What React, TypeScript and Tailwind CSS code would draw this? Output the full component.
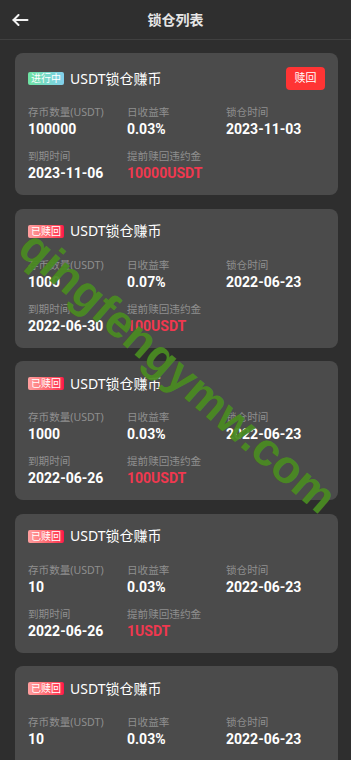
import { ReactNode } from 'react';

type Lock = {
    status: 'running' | 'redeemed';
    amount: string;
    rate: string;
    lockDate: string;
    endDate: string;
    penalty: string;
};

const locks: Lock[] = [
    { status: 'running', amount: '100000', rate: '0.03%', lockDate: '2023-11-03', endDate: '2023-11-06', penalty: '10000USDT' },
    { status: 'redeemed', amount: '1000', rate: '0.07%', lockDate: '2022-06-23', endDate: '2022-06-30', penalty: '100USDT' },
    { status: 'redeemed', amount: '1000', rate: '0.03%', lockDate: '2022-06-23', endDate: '2022-06-26', penalty: '100USDT' },
    { status: 'redeemed', amount: '10', rate: '0.03%', lockDate: '2022-06-23', endDate: '2022-06-26', penalty: '1USDT' },
    { status: 'redeemed', amount: '10', rate: '0.03%', lockDate: '2022-06-23', endDate: '2022-06-26', penalty: '1USDT' },
];

const cjk = { fontFamily: '"Noto Sans", "Noto Sans CJK SC", sans-serif' };
const num = { fontFamily: '"Liberation Sans Narrow", Roboto, "Noto Sans CJK SC", sans-serif' };

function Field({ label, children, red }: { label: string; children: ReactNode; red?: boolean }) {
    return (
        <div className="flex flex-col">
            <div className="text-[10.6px] leading-[16px] text-[#8f8f8f]" style={cjk}>{label}</div>
            <div
                className={red ? 'text-[14px] leading-[18px] font-bold text-[#f0384f]' : 'text-[14px] leading-[18px] font-bold text-white'}
                style={num}
            >
                {children}
            </div>
        </div>
    );
}

function LockCard({ item }: { item: Lock }) {
    const running = item.status === 'running';
    return (
        <div className={running ? 'ml-[15px] mr-[13px] rounded-lg bg-[#4b4b4b] px-[13px] pt-[14px] pb-[13px]' : 'ml-[15px] mr-[13px] rounded-lg bg-[#4b4b4b] px-[13px] pt-[11px] pb-[13px]'}>
            {/* title row */}
            <div className="flex h-[23px] items-center">
                {running ? (
                    <span className="h-[13px] rounded-[2px] bg-gradient-to-r from-[#6ee3a2] to-[#82cfec] px-[3px] text-[10px] leading-[13px] text-white" style={cjk}>进行中</span>
                ) : (
                    <span className="h-[13px] rounded-[2px] bg-gradient-to-r from-[#ff9f9f] to-[#ff1247] px-[3px] text-[10px] leading-[13px] text-white" style={cjk}>已赎回</span>
                )}
                <span className="ml-[6px] text-[14px] leading-[20px] text-white" style={cjk}>USDT锁仓赚币</span>
                {running && (
                    <button className="ml-auto h-[23px] w-[39px] rounded-[4px] bg-[#ff3434] text-[11px] text-white" style={cjk}>赎回</button>
                )}
            </div>

            <div className="mt-[14px] grid grid-cols-3 gap-y-[10px]">
                <Field label="存币数量(USDT)">{item.amount}</Field>
                <Field label="日收益率">{item.rate}</Field>
                <Field label="锁仓时间">{item.lockDate}</Field>
                <Field label="到期时间">{item.endDate}</Field>
                <Field label="提前赎回违约金" red>{item.penalty}</Field>
            </div>
        </div>
    );
}

export default function App() {
    return (
        <div className="relative min-h-screen overflow-hidden bg-[#2e2e2e]" style={cjk}>
            <div className="grid h-[40px] grid-cols-[40px_1fr_40px] items-center border-b border-[#404040] bg-[#2f2f2f]">
                <div className="flex items-center pl-[12px]">
                    <svg width="17" height="12" viewBox="0 0 17 12" fill="none" stroke="#f2f2f2" strokeWidth="2" strokeLinecap="round" strokeLinejoin="round">
                        <path d="M1.5 6H15.5" />
                        <path d="M6.5 1L1.5 6L6.5 11" />
                    </svg>
                </div>
                <div className="text-center text-[14px] font-bold text-[#e6e6e6]">锁仓列表</div>
                <div />
            </div>

            <div className="flex flex-col gap-[13.5px] pt-[13px] pb-[20px]">
                {locks.map((item, i) => (
                    <LockCard key={i} item={item} />
                ))}
            </div>

            {/* watermark */}
            <div
                className="pointer-events-none absolute left-[178px] top-[372px] whitespace-nowrap text-[46px] font-bold text-[#4a8a22] opacity-95"
                style={{ fontFamily: '"Liberation Sans", Arial, sans-serif', transform: 'translate(-50%, -50%) rotate(41deg)' }}
            >
                qingfengymw.com
            </div>
        </div>
    );
}
